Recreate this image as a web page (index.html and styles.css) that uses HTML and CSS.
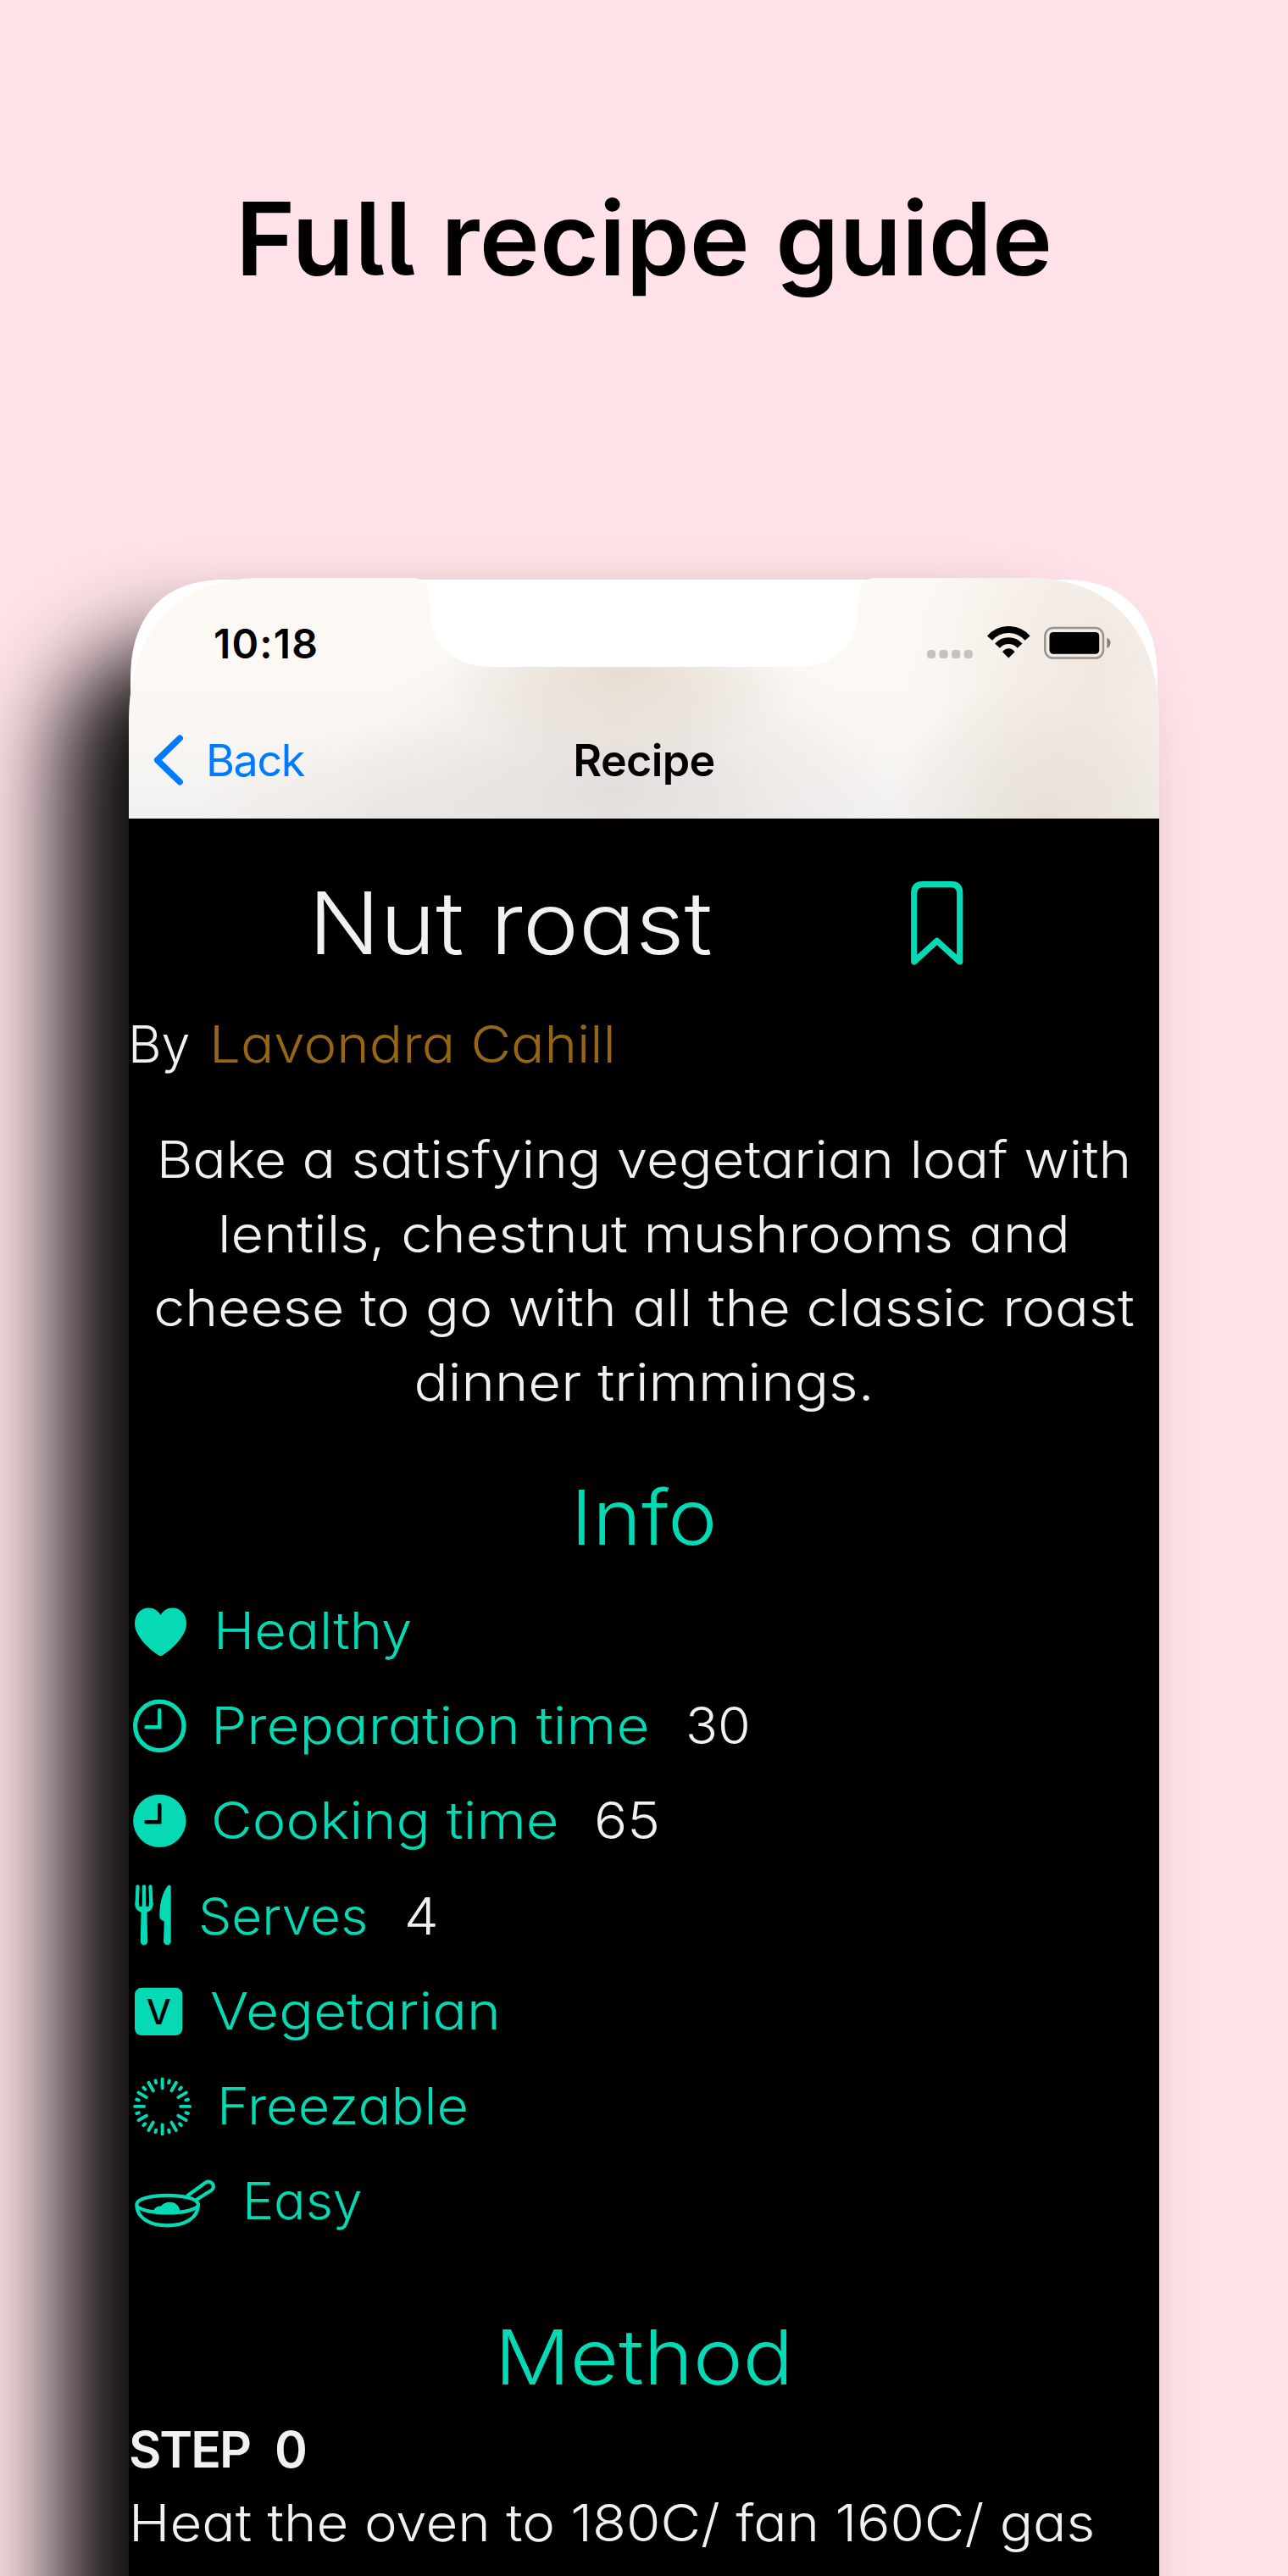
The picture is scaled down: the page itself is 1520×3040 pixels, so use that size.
FILE: index.html
```html
<!DOCTYPE html>
<html lang="en">
<head>
<meta charset="utf-8">
<title>Full recipe guide</title>
<link rel="stylesheet" href="styles.css">
</head>
<body>
<h1 class="headline">Full recipe guide</h1>
<main class="phone">
  <div class="frame"></div>
  <header class="topbar">
    <div class="status">
      <span class="time">10:18</span>
      <div class="status-icons">
        <svg width="54" height="40" viewBox="0 0 54 40" fill="#c6c3bf"><rect y="28" width="10" height="10" rx="3.5"/><rect x="14.6" y="28" width="10" height="10" rx="3.5"/><rect x="29.2" y="28" width="10" height="10" rx="3.5"/><rect x="43.8" y="28" width="10" height="10" rx="3.5"/></svg>
        <svg width="51" height="40" viewBox="0 0 51 40"><g fill="none" stroke="#000"><path stroke-width="8" d="M3 14.1A29.6 29.6 0 0 1 47.6 14.1"/><path stroke-width="7.8" d="M12 23.1A17.6 17.6 0 0 1 38.6 23.1"/></g><path d="M25.3 37.4L18 30.3C22 25 28.6 25 32.6 30.3Z"/></svg>
        <svg width="79" height="40" viewBox="0 0 79 40"><rect x="1.3" y="2" width="68.7" height="35.6" rx="9.5" fill="none" stroke="#979390" stroke-width="2.5"/><rect x="6.5" y="7" width="58.7" height="25.7" rx="4.5"/><path d="M74.3 13.6Q78.6 15.6 78.6 19.8T74.3 26Z" fill="#86827f"/></svg>
      </div>
    </div>
    <nav class="nav">
      <a class="back"><svg width="36" height="60" viewBox="0 0 36 60"><path d="M31.3 4.2L4.6 30L31.3 55.8" fill="none" stroke="#007aff" stroke-width="7.4" stroke-linecap="round" stroke-linejoin="round"/></svg><span>Back</span></a>
      <span class="nav-title">Recipe</span>
    </nav>
  </header>
  <article class="content">
    <div class="title-row">
      <h2 class="title">Nut roast</h2>
      <svg width="62" height="99" viewBox="0 0 62 99"><path d="M3.7 95V14Q3.7 3.7 14 3.7H47.4Q57.7 3.7 57.7 14V95L30.7 70.3Z" fill="none" stroke="#06dab5" stroke-width="7.2" stroke-linejoin="round"/></svg>
    </div>
    <p class="byline"><span>By</span><span class="author">Lavondra Cahill</span></p>
    <div class="summary">
      <div class="l1">Bake a satisfying vegetarian loaf with</div>
      <div class="l2">lentils, chestnut mushrooms and</div>
      <div class="l3">cheese to go with all the classic roast</div>
      <div class="l4">dinner trimmings.</div>
    </div>
    <h3 class="section info-head">Info</h3>
    <ul class="info">
      <li class="healthy"><svg width="100" height="112" viewBox="0 0 100 112"><path d="M37.5 86.2C34 86.2 7 66 7 48.4C7 37 14 29.6 23.5 29.6C29.5 29.6 34.5 33 37.5 38C40.5 33 45.5 29.6 51.5 29.6C61 29.6 68 37 68 48.4C68 66 41 86.2 37.5 86.2Z"/></svg><span class="name">Healthy</span></li>
      <li class="prep"><svg width="97" height="112" viewBox="0 0 97 112"><circle cx="36.3" cy="56.9" r="28.7" fill="none" stroke="#06dab5" stroke-width="5.2"/><path d="M36.3 38.2V58.2H20.5" fill="none" stroke="#06dab5" stroke-width="4.4" stroke-linecap="round"/></svg><span class="name">Preparation time</span><span class="value">30</span></li>
      <li class="cook"><svg width="97" height="112" viewBox="0 0 97 112"><circle cx="36.3" cy="56.9" r="31.2"/><path d="M36.3 38.2V58.2H20.5" fill="none" stroke="#000" stroke-width="4.4" stroke-linecap="round"/></svg><span class="name">Cooking time</span><span class="value">65</span></li>
      <li class="serves"><svg width="82" height="112" viewBox="0 0 82 112"><path d="M10.5 21.4L9.6 42M18 21.4V43M25.5 21.4L26.4 42" fill="none" stroke="#06dab5" stroke-width="4.3" stroke-linecap="round"/><path d="M7.4 40V42C7.4 47.5 10 49.5 14.5 52L13.8 86.2a4.2 4.2 0 0 0 8.4 0L21.5 52C26 49.5 28.6 47.5 28.6 42V40H23.9V43.2a1.9 2 0 0 1-3.8 0V40H15.9V43.2a1.9 2 0 0 1-3.8 0V40Z"/><path d="M49.7 22C49.7 19 47 18.6 45.5 21C39 30 36.3 42 36.3 56C36.3 60 38 60.5 41.8 62.5L41 86a4.3 4.3 0 0 0 8.7 0Z"/></svg><span class="name">Serves</span><span class="value">4</span></li>
      <li class="veg"><svg width="96" height="112" viewBox="0 0 96 112"><rect x="7" y="28.8" width="56.3" height="56.3" rx="8"/><text class="badge" x="35.3" y="71.6">V</text></svg><span class="name">Vegetarian</span></li>
      <li class="freeze"><svg width="104" height="112" viewBox="-39.6 -56.9 104 112"><defs><path id="ray" d="M0 -32.5V-21.6M8.15 -30.4L7.45 -27.8" fill="none" stroke="#06dab5" stroke-width="3.9" stroke-linecap="round"/></defs><use href="#ray"/><use href="#ray" transform="rotate(30)"/><use href="#ray" transform="rotate(60)"/><use href="#ray" transform="rotate(90)"/><use href="#ray" transform="rotate(120)"/><use href="#ray" transform="rotate(150)"/><use href="#ray" transform="rotate(180)"/><use href="#ray" transform="rotate(210)"/><use href="#ray" transform="rotate(240)"/><use href="#ray" transform="rotate(270)"/><use href="#ray" transform="rotate(300)"/><use href="#ray" transform="rotate(330)"/></svg><span class="name">Freezable</span></li>
      <li class="easy"><svg width="134" height="112" viewBox="0 0 134 112"><g fill="none" stroke="#06dab5" stroke-width="4.2"><path d="M9.2 60.5C11 46.3 80 46.3 82 60.5C82 76 67 85.3 45.5 85.3S9.2 76 9.2 60.5"/><path d="M9.5 62.5C22 73.2 70 73.2 81.5 62.5"/><path d="M68.5 50.8L90.5 34.8C97 30.5 103.5 39.5 97.5 43.8L78.5 55.8"/></g><path d="M28.5 69.8C30 64 34 62 38 62.5C40 59.5 44 57.7 49 57.7C55 57.7 60 62 60.7 69.8L45 71.5Z"/></svg><span class="name">Easy</span></li>
    </ul>
    <h3 class="section method-head">Method</h3>
    <p class="step"><span>STEP</span><span class="step-no">0</span></p>
    <p class="instruction">Heat the oven to 180C/ fan 160C/ gas</p>
  </article>
</main>
</body>
</html>
```
FILE: styles.css
```css
* { box-sizing: border-box; margin: 0; padding: 0; }
html, body { height: 3040px; overflow: hidden; }
body {
  background: #fee2e7;
  font-family: Inter, "Open Sans", sans-serif;
  font-weight: 300;
  color: #f2f0f1;
}
svg { display: block; flex: none; }

.headline {
  padding-top: 212px;
  height: 682px;
  line-height: 140px;
  font-size: 120px;
  font-weight: 600;
  letter-spacing: .2px;
  font-feature-settings: "cv05";
  text-align: center;
  color: #000;
}

.phone {
  position: relative;
  width: 1216px;
  height: 2358px;
  margin-left: 152px;
}
/* The caster sits off to the left; only its shadow lands behind the phone. */
.phone::before {
  content: "";
  position: absolute;
  top: -200px;
  bottom: 0;
  left: -2000px;
  width: 1216px;
  border-radius: 130px 130px 0 0;
  box-shadow: 1919px 280px 104px rgba(0, 0, 0, .95);
}
.frame {
  position: absolute;
  inset: 0 0 auto;
  height: 284px;
  background: #fff;
  clip-path: path("M2 284V118C2 46 40 2 112 2H1104C1176 2 1214 46 1214 118V284Z");
}

.topbar {
  position: relative;
  height: 284px;
  padding-top: 47px;
  clip-path: path("M0 284V165C2 58 60 0 155 0H333C350 0 355.5 8 355.5 38C355.5 80 385 105 428 105H788C831 105 860.5 80 860.5 38C860.5 8 866 0 883 0H1061C1156 0 1214 58 1216 165V284Z");
  background:
    radial-gradient(ellipse 210px 110px at 580px 115px, rgba(228, 217, 206, .85), rgba(228, 217, 206, 0)),
    radial-gradient(ellipse 330px 190px at 570px 250px, rgba(225, 219, 217, .9), rgba(225, 219, 217, 0)),
    radial-gradient(ellipse 190px 170px at 1080px 284px, rgba(228, 221, 213, .8), rgba(228, 221, 213, 0)),
    radial-gradient(ellipse 220px 330px at 1140px 110px, rgba(240, 230, 223, .95), rgba(240, 230, 223, 0)),
    radial-gradient(ellipse 230px 110px at 300px 284px, rgba(233, 228, 222, .7), rgba(233, 228, 222, 0)),
    linear-gradient(#fdf9f5, #fbf8f4 55%, #f2f1ef);
  color: #000;
}
.status {
  display: flex;
  align-items: center;
  justify-content: space-between;
  height: 60px;
  padding: 0 57px 0 100px;
}
.time { font-size: 48px; font-weight: 600; letter-spacing: 1.2px; }
.status-icons { display: flex; gap: 16.5px; }
.nav {
  display: grid;
  grid-template-columns: 1fr auto 1fr;
  align-items: center;
  height: 80px;
  margin-top: 68px;
  font-size: 52px;
}
.back {
  display: flex;
  align-items: center;
  gap: 26px;
  padding-left: 29px;
  font-weight: 400;
  letter-spacing: -1.4px;
  color: #007aff;
}
.nav-title { font-weight: 600; letter-spacing: -.6px; }

.content {
  position: relative;
  height: 2074px;
  padding-top: 63px;
  background: #000;
  font-size: 61px;
  font-feature-settings: "cv11";
  white-space: nowrap;
}
.title-row {
  display: flex;
  align-items: center;
  height: 120px;
  padding-left: 212px;
}
.title {
  width: 711px;
  font-size: 102px;
  font-weight: 300;
  transform: scaleX(1.092);
  transform-origin: left;
}
.byline {
  display: flex;
  gap: 22px;
  height: 88px;
  line-height: 88px;
  margin-top: 39px;
}
.byline span:first-child { margin-left: -1px; }
.author { color: #966616; transform: scaleX(1.073); transform-origin: left; }
.summary {
  margin-top: 49px;
  line-height: 87.5px;
  text-align: center;
}
.l1 { transform: scaleX(1.076); }
.l2 { transform: scaleX(1.092); }
.l3 { transform: scaleX(1.085); }
.l4 { transform: scaleX(1.099); }

.section {
  height: 120px;
  line-height: 120px;
  font-size: 90px;
  font-weight: 300;
  text-align: center;
  color: #06dab5;
}
.info-head { margin-top: 56px; transform: scaleX(1.09); }
.method-head { margin-top: 68.5px; transform: scaleX(1.1); }
.info {
  display: grid;
  grid-auto-rows: 112.2px;
  margin-top: 17px;
  list-style: none;
}
.info li { display: flex; align-items: center; }
.info svg { fill: #06dab5; }
.name { color: #06dab5; }
.name, .value { transform-origin: left; }
.healthy .name { transform: scaleX(1.066); }
.prep .name { transform: scaleX(1.105); }
.cook .name { transform: scaleX(1.098); }
.serves .name { transform: scaleX(1.02); }
.veg .name { transform: scaleX(1.108); }
.freeze .name { transform: scaleX(1.062); }
.easy .name { transform: scaleX(1.022); }
.prep .value { margin-left: 92px; transform: scaleX(1.03); }
.cook .value { margin-left: 78px; transform: scaleX(1.07); }
.serves .value { margin-left: 47px; transform: scaleX(1.06); }
.badge { font-size: 41px; font-weight: 500; text-anchor: middle; fill: #000; }

.step {
  display: flex;
  gap: 29px;
  height: 87px;
  line-height: 87px;
  margin-top: 4.7px;
  font-size: 59px;
  font-weight: 600;
  letter-spacing: -2px;
}
.instruction {
  height: 87px;
  line-height: 87px;
  transform: scaleX(1.072);
  transform-origin: left;
}
```
